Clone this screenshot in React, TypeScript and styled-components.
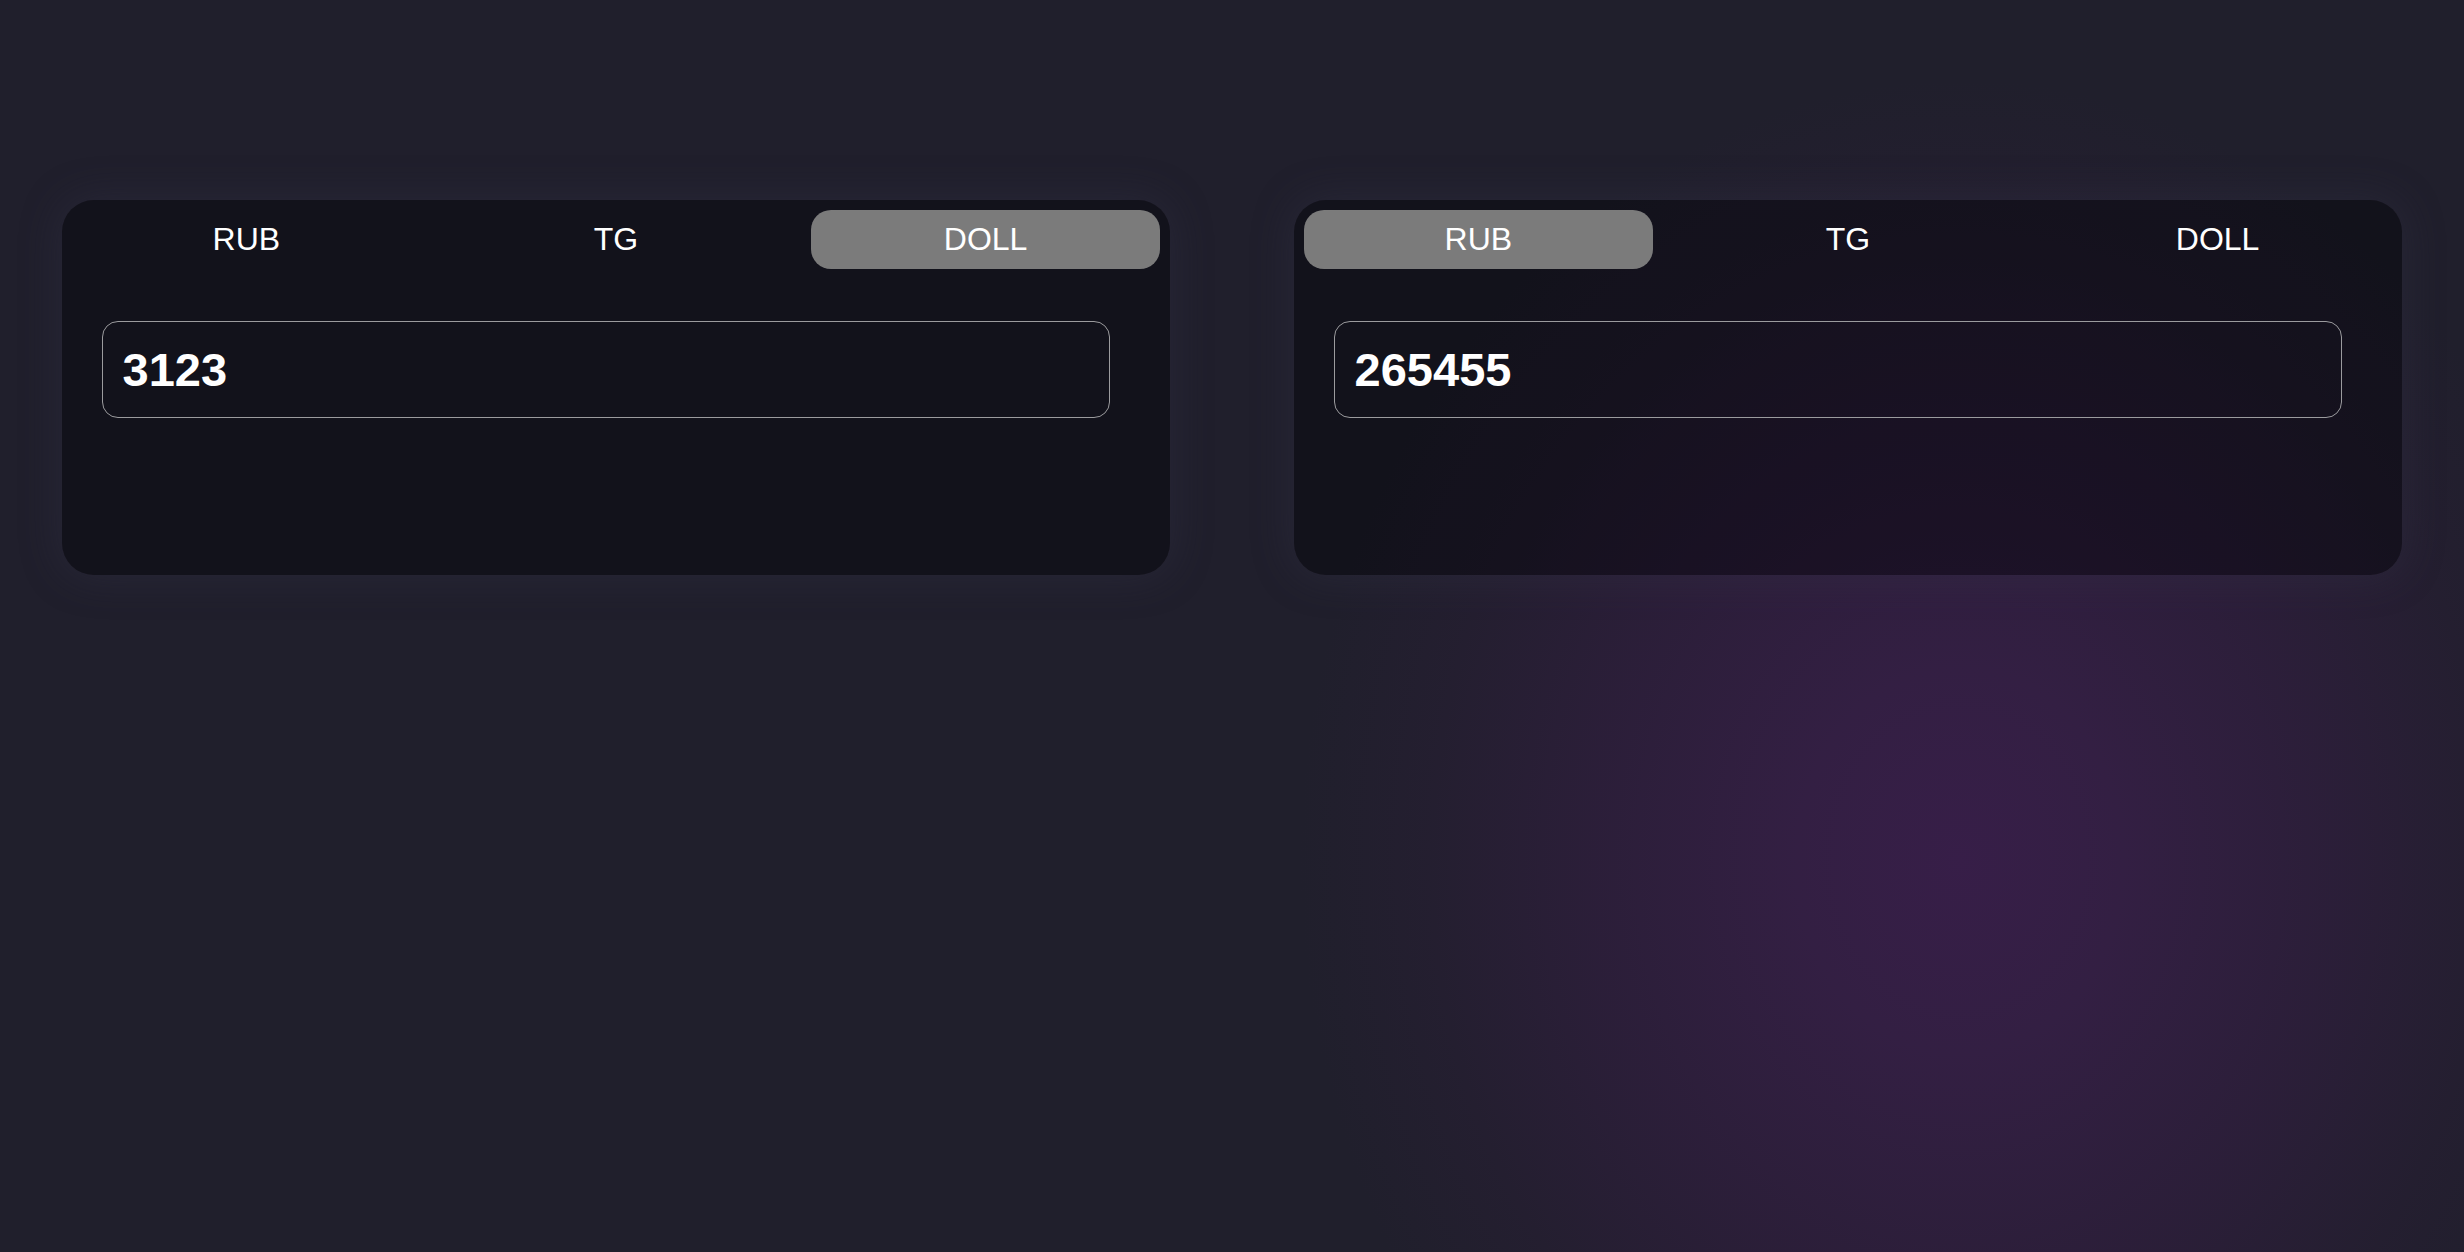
import { useState } from "react";
import styled, { createGlobalStyle } from "styled-components";

const GlobalStyle = createGlobalStyle`
  html, body {
    margin: 0;
    padding: 0;
    height: 100%;
  }
  body {
    background-color: #201f2c;
    font-family: "Liberation Sans", Arial, sans-serif;
  }
`;

const Page = styled.div`
  min-height: 100vh;
  box-sizing: border-box;
  padding-top: 200px;
  display: flex;
  flex-direction: row;
  justify-content: space-around;
  align-items: flex-start;
  background:
    radial-gradient(
      ellipse 660px 780px at 1960px 860px,
      rgba(55, 30, 72, 1) 0%,
      rgba(52, 31, 68, 0.95) 25%,
      rgba(46, 30, 60, 0.82) 55%,
      rgba(40, 30, 52, 0.5) 80%,
      rgba(32, 31, 44, 0) 100%
    ),
    #201f2c;
`;

const Card = styled.div`
  width: 45%;
  height: 375px;
  box-sizing: border-box;
  padding: 10px;
  border-radius: 32px;
  background-color: rgba(0, 0, 4, 0.41);
  box-shadow: 0 0 40px rgba(52, 50, 70, 0.45);
`;

const TabRow = styled.div`
  display: flex;
  flex-direction: row;
  gap: 20px;
`;

const Tab = styled.button<{ $active: boolean }>`
  flex: 1;
  height: 59px;
  border: none;
  border-radius: 20px;
  background-color: ${(p) => (p.$active ? "#7b7b7b" : "transparent")};
  color: #ffffff;
  font-family: "Liberation Sans", Arial, sans-serif;
  font-size: 32px;
  display: flex;
  align-items: center;
  justify-content: center;
  cursor: pointer;
  padding: 0;
`;

const AmountInput = styled.input`
  display: block;
  box-sizing: border-box;
  width: calc(100% - 80px);
  height: 97px;
  margin: 52px 50px 0 30px;
  padding: 0 20px;
  border: 1px solid #9b9b9e;
  border-radius: 16px;
  background: transparent;
  color: #ffffff;
  font-family: "Liberation Sans", Arial, sans-serif;
  font-weight: bold;
  font-size: 47px;
  outline: none;
`;

const currencies = ["RUB", "TG", "DOLL"];

const Converter = (props) => {
  const [active, setActive] = useState(props.currency);
  const [value, setValue] = useState(props.value);

  return (
    <Card>
      <TabRow>
        {currencies.map((c) => (
          <Tab key={c} $active={c === active} onClick={() => setActive(c)}>
            {c}
          </Tab>
        ))}
      </TabRow>
      <AmountInput value={value} onChange={(e) => setValue(e.target.value)} />
    </Card>
  );
};

const App = () => {
  return (
    <>
      <GlobalStyle />
      <Page>
        <Converter currency="DOLL" value="3123" />
        <Converter currency="RUB" value="265455" />
      </Page>
    </>
  );
};

export default App;
